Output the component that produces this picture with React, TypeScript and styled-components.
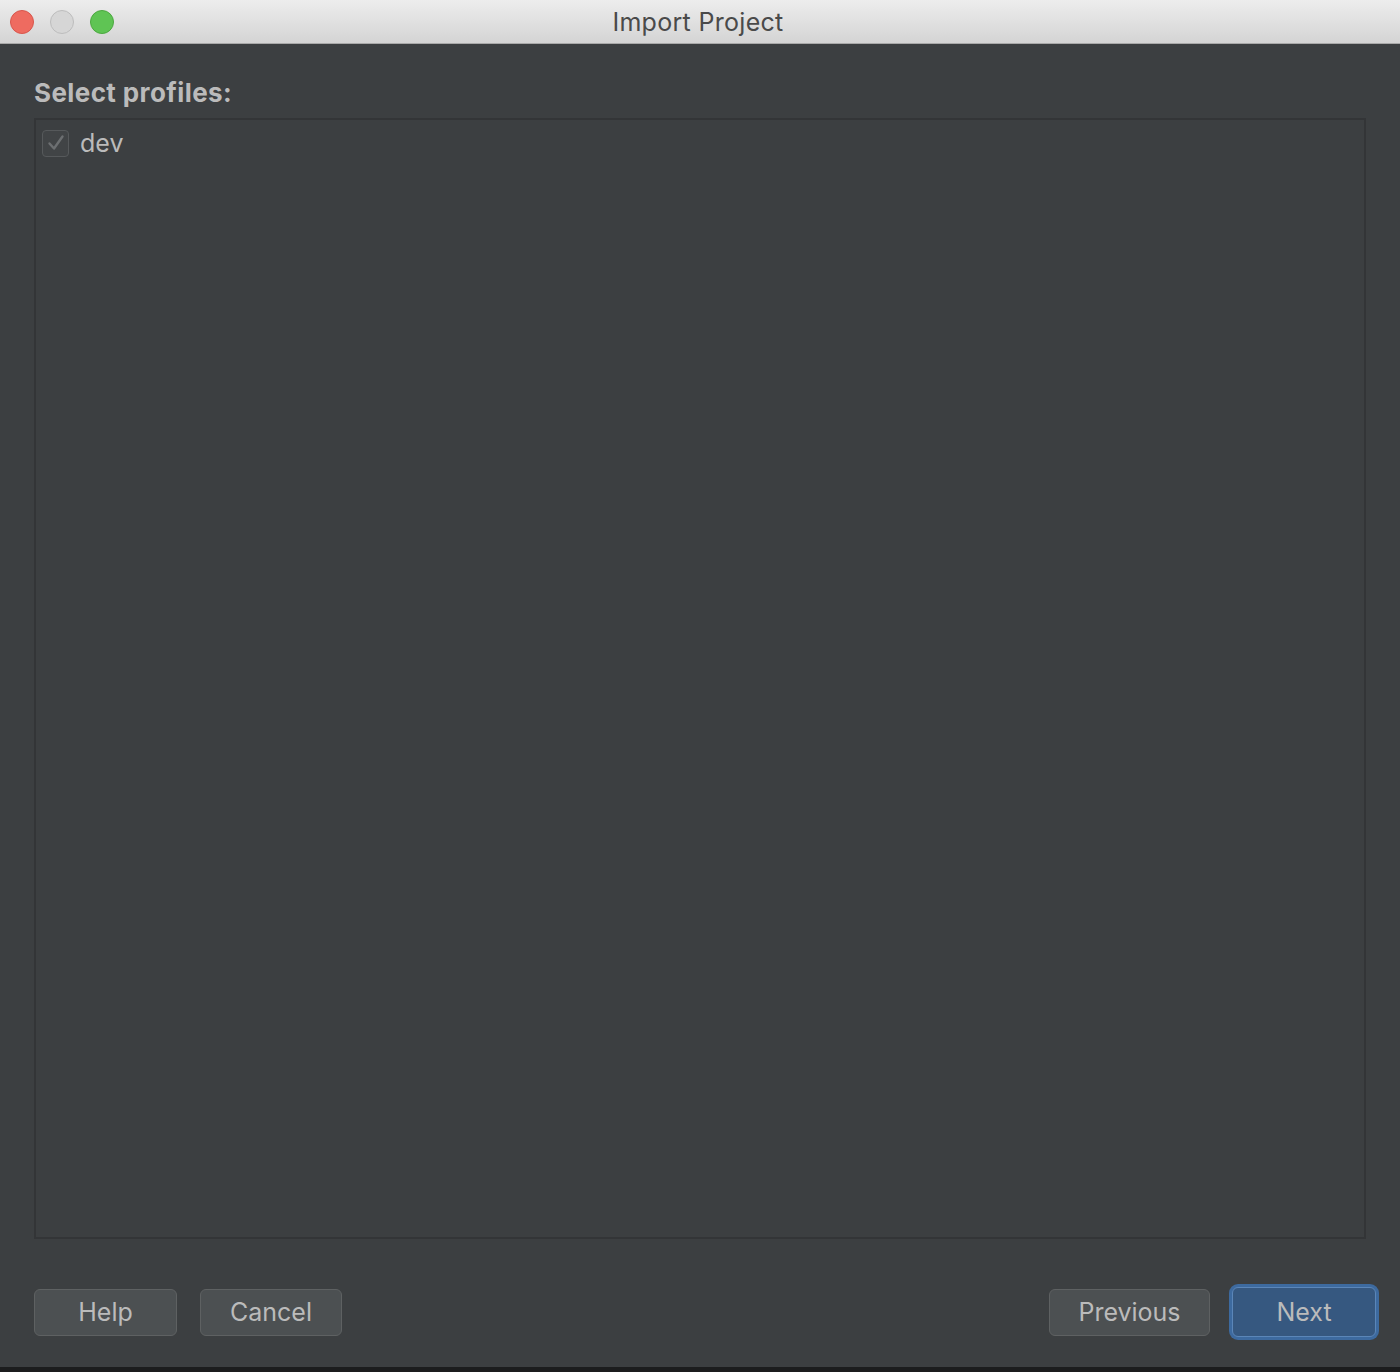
import React from "react";
import styled, { createGlobalStyle } from "styled-components";

const Global = createGlobalStyle`
  html, body {
    margin: 0;
    padding: 0;
    background: #3c3f41;
  }
  * { box-sizing: border-box; }
`;

const Window = styled.div`
  width: 1400px;
  height: 1372px;
  display: flex;
  flex-direction: column;
  background: #3c3f41;
  font-family: Inter, "Liberation Sans", sans-serif;
  overflow: hidden;
`;

const TitleBar = styled.div`
  position: relative;
  height: 44px;
  flex: none;
  display: flex;
  align-items: center;
  justify-content: center;
  background: linear-gradient(#ededed, #d4d4d4);
  border-bottom: 1px solid #a9a9a9;
`;

const Lights = styled.div`
  position: absolute;
  left: 10px;
  top: 10px;
  display: flex;
  gap: 16px;
`;

const Light = styled.span<{ $bg: string; $edge: string }>`
  width: 24px;
  height: 24px;
  border-radius: 50%;
  background: ${(p) => p.$bg};
  border: 1px solid ${(p) => p.$edge};
`;

const Title = styled.div`
  font-size: 25px;
  color: #4a4a4a;
  letter-spacing: 0.3px;
  margin-left: -4px;
`;

const Body = styled.div`
  flex: 1;
  display: flex;
  flex-direction: column;
  padding: 34px 34px 28px 34px;
`;

const Label = styled.div`
  font-size: 26px;
  font-weight: 700;
  color: #bbbbbb;
  line-height: 30px;
  letter-spacing: 0.4px;
`;

const Panel = styled.div`
  flex: 1;
  margin-top: 10px;
  border: 2px solid #333537;
  padding: 9px 6px;
`;

const Row = styled.label`
  display: flex;
  align-items: center;
  gap: 11px;
  font-size: 25px;
  color: #bbbbbb;
  height: 28px;
`;

const Box = styled.span`
  width: 27px;
  height: 27px;
  border-radius: 4px;
  border: 1px solid #56595b;
  background: #414446;
  display: flex;
  align-items: center;
  justify-content: center;
`;

const Buttons = styled.div`
  display: flex;
  align-items: center;
  margin-top: 46px;
  margin-right: -13px;
  height: 54px;
  gap: 23px;
`;

const Spacer = styled.div`
  flex: 1;
`;

const Button = styled.button<{ $w: number; $primary?: boolean }>`
  width: ${(p) => p.$w}px;
  height: ${(p) => (p.$primary ? 50 : 47)}px;
  border-radius: 6px;
  font-family: inherit;
  font-size: 25px;
  color: #bbbbbb;
  background: ${(p) => (p.$primary ? "#365880" : "#4c5052")};
  border: 1px solid ${(p) => (p.$primary ? "#5b86b8" : "#5e6162")};
  box-shadow: ${(p) => (p.$primary ? "0 0 0 3px #3d6a9f" : "none")};
  margin: ${(p) => (p.$primary ? "0 3px 0 -1px" : "0")};
  padding: 0;
  cursor: pointer;
`;

const Strip = styled.div`
  height: 5px;
  flex: none;
  background: #1c1d1e;
`;

export default function App() {
  return (
    <Window>
      <Global />
      <TitleBar>
        <Lights>
          <Light $bg="#ee6b60" $edge="#d8564c" />
          <Light $bg="#d6d6d6" $edge="#bdbdbd" />
          <Light $bg="#5fc454" $edge="#4ca840" />
        </Lights>
        <Title>Import Project</Title>
      </TitleBar>
      <Body>
        <Label>Select profiles:</Label>
        <Panel>
          <Row>
            <Box>
              <svg width="20" height="20" viewBox="0 0 20 20">
                <path d="M3.5 10.5 L8 15.5 L16.5 3.5" fill="none" stroke="#6c6f71" strokeWidth="2.4" strokeLinecap="round" strokeLinejoin="round" />
              </svg>
            </Box>
            dev
          </Row>
        </Panel>
        <Buttons>
          <Button $w={143}>Help</Button>
          <Button $w={142}>Cancel</Button>
          <Spacer />
          <Button $w={161}>Previous</Button>
          <Button $w={144} $primary>Next</Button>
        </Buttons>
      </Body>
      <Strip />
    </Window>
  );
}
